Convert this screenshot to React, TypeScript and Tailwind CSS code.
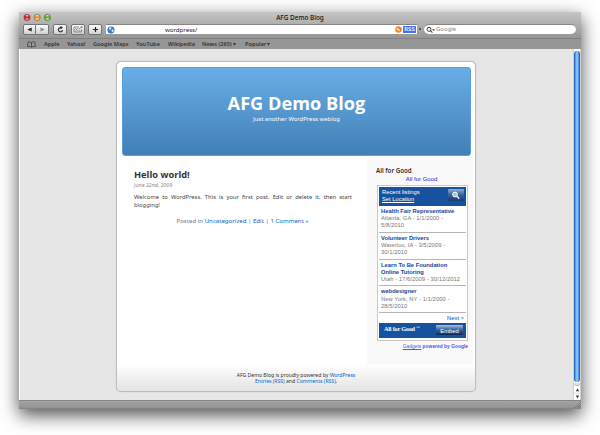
import React from 'react';

const lucida = "font-['Noto_Sans','Lucida_Grande',sans-serif]";
const trebuchet = "font-['Open_Sans','Trebuchet_MS',sans-serif]";
const arial = "font-['Liberation_Sans',Arial,sans-serif]";

const button =
  'flex h-[11px] items-center justify-center border border-[#747474] bg-gradient-to-b from-[#fafafa] to-[#d2d2d2]';

const listings = [
  { title: ['Health Fair Representative'], lines: ['Atlanta, GA - 1/1/2000 -', '5/8/2010'] },
  { title: ['Volunteer Drivers'], lines: ['Waterloo, IA - 3/5/2009 -', '30/1/2010'] },
  { title: ['Learn To Be Foundation', 'Online Tutoring'], lines: ['Utah - 17/6/2009 - 30/12/2012'] },
  { title: ['webdesigner'], lines: ['New York, NY - 1/1/2000 -', '28/5/2010'] },
];

function TrafficLights() {
  return (
    <svg className="block h-[8px] w-[32px]" viewBox="0 0 32 8">
      {[
        ['#d91f24', '#ffa0a0'],
        ['#ed8d25', '#ffe0a0'],
        ['#62a82e', '#d2f29c'],
      ].map(([fill, shine], i) => (
        <g key={fill}>
          <circle cx={4 + i * 10.2} cy="4.4" r="3.2" fill={fill} stroke="#555" strokeOpacity=".65" strokeWidth=".6" />
          <ellipse cx={4 + i * 10.2} cy="2.7" rx="1.6" ry=".8" fill="#fff" opacity=".7" />
          <ellipse cx={4 + i * 10.2} cy="6" rx="1.8" ry=".9" fill={shine} opacity=".75" />
        </g>
      ))}
    </svg>
  );
}

function Toolbar() {
  return (
    <div className="flex h-[14px] items-start pl-[4px] pr-[5px]">
      <div className={`${button} w-[13px] rounded-l-[2px]`}>
        <svg className="h-[5px] w-[5px]" viewBox="0 0 5 5"><path d="M4.7 .4v4.2L.3 2.5z" fill="#222" /></svg>
      </div>
      <div className={`${button} w-[13px] rounded-r-[2px] border-l-0`}>
        <svg className="h-[5px] w-[5px]" viewBox="0 0 5 5"><path d="M.5 .4v4.2l4.2-2.1z" fill="#888" /></svg>
      </div>
      <div className={`${button} ml-[4px] w-[14px] rounded-[2px]`}>
        <svg className="h-[7px] w-[7px]" viewBox="0 0 7 7">
          <path d="M5.5 4.2A2.1 2.1 0 1 1 4 1.7" fill="none" stroke="#222" strokeWidth="1.1" />
          <path d="M3.5 0L6 1.6 3.6 3.2z" fill="#222" />
        </svg>
      </div>
      <div className={`${button} ml-[4px] w-[14px] rounded-[2px]`}>
        <svg className="h-[7px] w-[10px]" viewBox="0 0 10 7">
          <path d="M6 1H1v5h7.5V3.3M2.5 2.4l2 2.2M4.5 2.4l-2 2.2M5.5 4.8h1.8M5.5 3.3L9 .8M7.8 .7h1.4v1.3" fill="none" stroke="#666" strokeWidth=".7" />
        </svg>
      </div>
      <div className={`${button} ml-[3px] w-[14px] rounded-[2px]`}>
        <svg className="h-[7px] w-[7px]" viewBox="0 0 7 7"><path d="M3.5 .9v5.2M.9 3.5h5.2" stroke="#222" strokeWidth="1.2" /></svg>
      </div>
      <div className="ml-[4px] flex h-[10px] w-[311px] items-center border-t border-[#868686] bg-white">
        <svg className="ml-px h-[8px] w-[8px]" viewBox="0 0 8 8">
          <circle cx="4" cy="4" r="3.3" fill="#3b7ed8" stroke="#2859a8" strokeWidth=".5" />
          <path d="M1.8 2.1L4.4 1 4 3 2.5 3.7zM4.6 4l1.8-.8.2 2-1.6 1z" fill="#dff0ff" />
        </svg>
        <span className={`${lucida} ml-[50px] whitespace-nowrap text-[6.1px] leading-[9px] text-[#222]`}>wordpress/</span>
        <svg className="ml-auto h-[7px] w-[7px]" viewBox="0 0 7 7">
          <circle cx="3.5" cy="3.5" r="3.2" fill="#f47c1c" />
          <path d="M2 3.1h1.8a1.2 1.2 0 0 1 0 2.2M3.1 1.7L1.7 3.1l1.4 1.4" fill="none" stroke="#fff" strokeWidth=".9" />
        </svg>
        <span className={`${lucida} ml-px mr-px h-[7px] w-[13px] bg-[#4c73e5] text-center text-[6px] font-medium leading-[7px] text-white`}>RSS</span>
      </div>
      <span className="ml-[2px] mt-[4px] h-[2px] w-[2px] bg-[#555]" />
      <div className="ml-[3px] flex h-[10px] flex-1 items-center rounded-full border-t border-[#858585] bg-white">
        <svg className="ml-[2px] h-[8px] w-[9px]" viewBox="0 0 9 8">
          <circle cx="3" cy="3.3" r="2" fill="none" stroke="#444" strokeWidth="1" />
          <path d="M4.4 4.7l2 2" stroke="#444" strokeWidth="1.1" />
          <path d="M6 3.3h3L7.5 5z" fill="#444" />
        </svg>
        <span className={`${lucida} ml-px text-[6px] leading-[9px] text-[#888]`}>Google</span>
      </div>
    </div>
  );
}

function DownArrow() {
  return <svg className="h-[3px] w-[3px]" viewBox="0 0 3 3"><path d="M0 0h3L1.5 2.7z" fill="#333" /></svg>;
}

function Bookmarks() {
  return (
    <div className={`${lucida} flex h-[11px] items-center border-t border-[#818181] bg-[#969696] pl-[8px] text-[5.6px] font-semibold leading-[9px] text-[#333]`}>
      <svg className="h-[7px] w-[9px]" viewBox="0 0 9 7">
        <path d="M4.5 1.5Q2.5 .4 1.1 1L.5 5.6q2-.6 4 .6 2-1.2 4-.6L7.9 1Q6.5 .4 4.5 1.5V6" fill="none" stroke="#333" strokeWidth=".7" />
      </svg>
      <span className="ml-[8px] w-[23px] whitespace-nowrap">Apple</span>
      <span className="w-[26px] whitespace-nowrap">Yahoo!</span>
      <span className="w-[43px] whitespace-nowrap">Google Maps</span>
      <span className="w-[32px] whitespace-nowrap tracking-[0.1px]">YouTube</span>
      <span className="w-[34px] whitespace-nowrap">Wikipedia</span>
      <span className="flex w-[43px] items-center gap-[1px] whitespace-nowrap">News (265)<DownArrow /></span>
      <span className="flex items-center gap-[1px] whitespace-nowrap">Popular<DownArrow /></span>
    </div>
  );
}

function Gadget() {
  return (
    <div className={`${arial} ml-[10px] mt-[2px] h-[156px] w-[91px] border border-[#c9c9c9] bg-white p-px text-[5.8px] leading-[7.2px]`}>
      <div className="flex h-[19px] justify-between bg-[#16529d] pl-[3px] pt-[2px] text-white">
        <div className="whitespace-nowrap">
          <div>Recent listings</div>
          <div className="underline decoration-[0.5px] underline-offset-[1px]">Set Location</div>
        </div>
        <div className="mr-[2px] flex h-[12px] w-[16px] items-center justify-center rounded-[1px] bg-gradient-to-b from-[#91aed0] via-[#355f99] to-[#153d78]">
          <svg className="h-[9px] w-[10px]" viewBox="0 0 10 9">
            <circle cx="4" cy="3.5" r="2.4" fill="#a9bdd6" stroke="#fff" strokeWidth="1" />
            <path d="M5.7 5.1l2.6 2.6" stroke="#fff" strokeWidth="1.3" />
          </svg>
        </div>
      </div>
      {listings.map((item) => (
        <div key={item.title[0]} className="h-[26.8px] whitespace-nowrap border-b border-[#b5b5b5] pl-[2px] pt-[2px]">
          {item.title.map((line) => (
            <div key={line} className="font-bold text-[#1a4299]">{line}</div>
          ))}
          {item.lines.map((line) => (
            <div key={line} className="tracking-[0.06px] text-[#777]">{line}</div>
          ))}
        </div>
      ))}
      <div className="h-[10px] pr-[2px] pt-[1.5px] text-right text-[#1b45a8]">Next &gt;</div>
      <div className="flex h-[15px] justify-between bg-[#16529d] pl-[5px] pr-[3px] pt-[2px] text-white">
        <span className="whitespace-nowrap font-['Liberation_Serif',serif] text-[6.2px] font-bold leading-[7px] tracking-[-0.2px]">
          All for Good<sup className="text-[4px] font-normal leading-none"> ™</sup>
        </span>
        <span className="h-[10px] w-[27px] rounded-[1px] border-b border-[#0c2d5b] bg-gradient-to-b from-[#adc2da] via-[#3b679f] to-[#123a72] text-center leading-[12px]">Embed</span>
      </div>
    </div>
  );
}

function BlogPage() {
  return (
    <div className="ml-[97px] mt-[12px] h-[331px] w-[360px] rounded-[5px] border border-[#bdbdbd] bg-white shadow-[0_0_1px_#aaa]">
      <div className={`${trebuchet} ml-[5px] mt-[5px] h-[89px] w-[349px] rounded-[3px] border border-[#5c9dd5] bg-gradient-to-b from-[#69aee7] to-[#4180b6] pt-[25px] text-center text-white`}>
        <div className="h-[21px] whitespace-nowrap text-[18.2px] font-bold leading-[21px]">AFG Demo Blog</div>
        <div className={`${lucida} whitespace-nowrap pt-[1px] text-[5.9px] leading-[8px]`}>Just another WordPress weblog</div>
      </div>
      <div className="mt-px flex h-[207px]">
        <main className={`${lucida} w-[250px] pl-[17px] pt-[12px] text-[5.8px] text-[#444]`}>
          <h2 className={`${trebuchet} h-[12px] whitespace-nowrap text-[9.3px] font-bold leading-[12px] text-[#333]`}>Hello world!</h2>
          <div className="h-[8px] text-[5.1px] leading-[8px] text-[#888]">June 22nd, 2009</div>
          <div className="mt-[5px] w-[218px] leading-[7.5px]">
            <div className="flex justify-between whitespace-nowrap">
              {'Welcome to WordPress. This is your first post. Edit or delete it, then start'.split(' ').map((word, i) => (
                <span key={i}>{word}</span>
              ))}
            </div>
            <div>blogging!</div>
          </div>
          <div className="mt-[6.5px] w-[217px] whitespace-nowrap text-center text-[6.1px] leading-[9px] text-[#777]">
            Posted in <a className="text-[#0066cc]">Uncategorized</a> | <a className="text-[#0066cc]">Edit</a> | <a className="text-[#0066cc]">1 Comment »</a>
          </div>
        </main>
        <aside className="w-[106px] bg-[#f9f9f9] pt-[9px]">
          <h3 className={`${lucida} ml-[9px] h-[9px] whitespace-nowrap text-[6.2px] font-semibold leading-[9px] text-[#333]`}>All for Good</h3>
          <div className={`${arial} ml-[3px] h-[8px] text-center text-[6px] leading-[8px] text-[#2525dd]`}>All for Good</div>
          <Gadget />
          <div className={`${arial} mr-[5px] mt-[2px] whitespace-nowrap text-right text-[4.9px] font-bold leading-[7px] text-[#5454e0]`}>
            <span className="font-normal underline decoration-[0.5px]">Gadgets</span> powered by Google
          </div>
        </aside>
      </div>
      <footer className={`${lucida} h-[27px] rounded-b-[4px] bg-gradient-to-b from-white to-[#e3e3e3] pt-[8px] text-center text-[5.1px] leading-[6px] text-[#333]`}>
        <div>AFG Demo Blog is proudly powered by <a className="text-[#0066cc]">WordPress</a></div>
        <div><a className="text-[#0066cc]">Entries (RSS)</a> and <a className="text-[#0066cc]">Comments (RSS)</a>.</div>
      </footer>
    </div>
  );
}

function Scrollbar() {
  return (
    <div className="flex w-[8px] flex-col items-center border-x border-[#d0d0d0] bg-white">
      <div className="mt-[2px] h-[331px] w-[6px] rounded-full border-x border-[#2568b8] bg-gradient-to-r from-[#3d8ee7] via-[#96cfff] to-[#3988e0]" />
      <div className="mt-px h-[3px] w-full rounded-b-full border-b border-[#aaa] bg-[#e0e0e0]" />
      <svg className="h-[14px] w-[7px]" viewBox="0 0 7 14">
        <path d="M3.5 2.3l1.6 3H1.9zM3.5 12.4l1.6-3H1.9z" fill="#333" />
        <path d="M0 7.2h7" stroke="#ccc" strokeWidth=".6" />
      </svg>
    </div>
  );
}

export default function App() {
  return (
    <div className="h-[435px] w-[600px] overflow-hidden bg-white pl-[19px] pt-[12px]">
      <div className="h-[397px] w-[562px] bg-[#e6e6e6] shadow-[0_6px_17px_rgba(0,0,0,0.7)]">
        <div className="h-[26px] bg-gradient-to-b from-[#c5c5c5] to-[#969696]">
          <div className="flex h-[12px] items-start pt-px">
            <div className="w-[70px] pl-[4px]"><TrafficLights /></div>
            <div className={`${lucida} flex-1 pr-[70px] text-center text-[6.4px] font-medium leading-[9px] text-[#111]`}>AFG Demo Blog</div>
          </div>
          <Toolbar />
        </div>
        <Bookmarks />
        <div className="flex h-[351px] border-l border-white">
          <div className="w-[553px] overflow-hidden"><div className="-ml-px flow-root"><BlogPage /></div></div>
          <Scrollbar />
        </div>
        <div className="flex h-[9px] items-end justify-end border-y border-[#858585] bg-gradient-to-b from-[#a4a4a4] to-[#929292]">
          <svg className="h-[7px] w-[7px]" viewBox="0 0 7 7"><path d="M1 7l6-6M3.5 7L7 3.5M5.5 7L7 5.5" stroke="#666" strokeWidth=".7" /></svg>
        </div>
      </div>
    </div>
  );
}
